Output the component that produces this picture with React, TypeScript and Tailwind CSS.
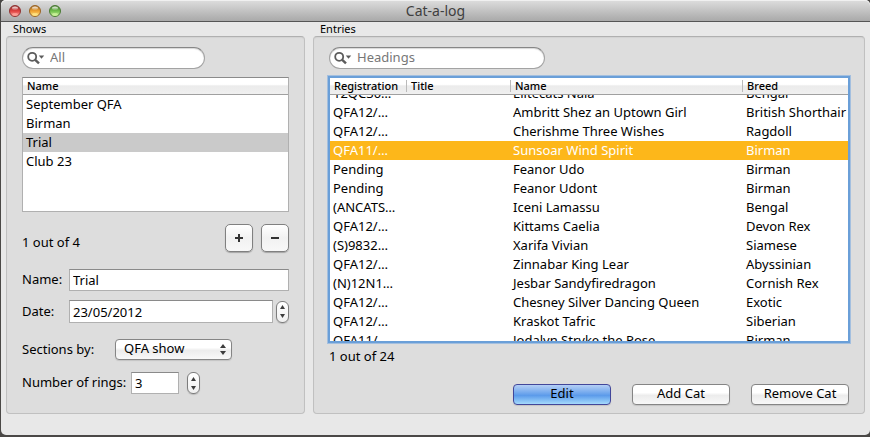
import { useLayoutEffect, useRef, type ReactNode } from "react";

const shows = ["September QFA", "Birman", "Trial", "Club 23"];

const entries: [string, string, string, string][] = [
  ["12QC30…", "", "Elitecats Nala", "Bengal"],
  ["QFA12/…", "", "Ambritt Shez an Uptown Girl", "British Shorthair"],
  ["QFA12/…", "", "Cherishme Three Wishes", "Ragdoll"],
  ["QFA11/…", "", "Sunsoar Wind Spirit", "Birman"],
  ["Pending", "", "Feanor Udo", "Birman"],
  ["Pending", "", "Feanor Udont", "Birman"],
  ["(ANCATS…", "", "Iceni Lamassu", "Bengal"],
  ["QFA12/…", "", "Kittams Caelia", "Devon Rex"],
  ["(S)9832…", "", "Xarifa Vivian", "Siamese"],
  ["QFA12/…", "", "Zinnabar King Lear", "Abyssinian"],
  ["(N)12N1…", "", "Jesbar Sandyfiredragon", "Cornish Rex"],
  ["QFA12/…", "", "Chesney Silver Dancing Queen", "Exotic"],
  ["QFA12/…", "", "Kraskot Tafric", "Siberian"],
  ["QFA11/…", "", "Jodalyn Stryke the Pose", "Birman"],
];

const headerCell =
  "sticky top-0 z-10 h-[17px] border-b border-[#a0a0a0] bg-linear-to-b from-white from-40% via-[#ebebeb] via-50% to-[#f0f0f0] p-0 text-left text-[11px] leading-4 font-medium";
const field =
  "border border-[#b0b0b0] border-t-[#8a8a8a] bg-white px-[3px] text-[13px] text-black outline-none";

function Light({ id, rim, base, glow }: { id: string; rim: string; base: string; glow: string }) {
  return (
    <button type="button" aria-label={id} className="size-3">
      <svg viewBox="0 0 12 12" className="block size-3">
        <defs>
          <linearGradient id={`${id}-body`} x1="0" y1="0" x2="0" y2="1">
            <stop offset="0" stopColor={rim} />
            <stop offset="0.5" stopColor={base} />
            <stop offset="1" stopColor={glow} />
          </linearGradient>
          <linearGradient id={`${id}-shine`} x1="0" y1="0" x2="0" y2="1">
            <stop offset="0" stopColor="#fff" stopOpacity="0.95" />
            <stop offset="1" stopColor="#fff" stopOpacity="0.1" />
          </linearGradient>
        </defs>
        <circle cx="6" cy="6" r="5.5" fill={`url(#${id}-body)`} stroke={rim} strokeWidth="1" />
        <ellipse cx="6" cy="3.2" rx="3" ry="1.8" fill={`url(#${id}-shine)`} />
        <ellipse cx="6" cy="9.4" rx="3" ry="1.3" fill={glow} opacity="0.7" />
      </svg>
    </button>
  );
}

function Search({ label, placeholder, width }: { label: string; placeholder: string; width: string }) {
  return (
    <label
      className={`flex h-[22px] items-center rounded-full border border-[#a3a3a3] border-t-[#868686] bg-white pl-1 shadow-[inset_0_1px_1px_#d8d8d8] ${width}`}
    >
      <svg viewBox="0 0 18 14" className="h-[14px] w-[18px] shrink-0" fill="none" stroke="#5c5c5c">
        <circle cx="5.2" cy="5.8" r="4" strokeWidth="1.8" />
        <path d="M8.2 8.8 L12 12.4" strokeWidth="2.4" />
        <path d="M11.8 4.6 H17.2 L14.5 7.8 Z" fill="#5c5c5c" stroke="none" />
      </svg>
      <input
        type="search"
        aria-label={label}
        placeholder={placeholder}
        className="ml-[5px] min-w-0 flex-1 bg-transparent text-[13px] outline-none placeholder:text-[#777777]"
      />
    </label>
  );
}

function Stepper({ label }: { label: string }) {
  return (
    <div className="flex h-[22px] w-[13px] shrink-0 flex-col overflow-hidden rounded-[6px] border border-[#7d7d7d] bg-linear-to-b from-white to-[#f0f0f0] shadow-[0_1px_1px_#bbbbbb]">
      <button type="button" aria-label={`Increase ${label}`} className="flex flex-1 items-center justify-center">
        <svg viewBox="0 0 5 4" className="mt-px h-1 w-[5px]" fill="#3c3c3c">
          <path d="M0 4 L2.5 0 L5 4 Z" />
        </svg>
      </button>
      <button type="button" aria-label={`Decrease ${label}`} className="flex flex-1 items-center justify-center">
        <svg viewBox="0 0 5 4" className="mb-px h-1 w-[5px]" fill="#3c3c3c">
          <path d="M0 0 L2.5 4 L5 0 Z" />
        </svg>
      </button>
    </div>
  );
}

function SquareButton({ label, d }: { label: string; d: string }) {
  return (
    <button
      type="button"
      aria-label={label}
      className="flex size-7 items-center justify-center rounded-[5px] border border-[#808080] bg-linear-to-b from-white via-[#f1f1f1] to-[#f8f8f8] shadow-[0_1px_1px_#a5a5a5]"
    >
      <svg viewBox="0 0 8 8" className="mb-px size-2" stroke="#333333" strokeWidth="2">
        <path d={d} />
      </svg>
    </button>
  );
}

function PushButton({ children, primary = false }: { children: ReactNode; primary?: boolean }) {
  return (
    <button
      type="button"
      className={`h-[21px] w-[98px] rounded-[4px] border pb-[2px] text-[13px] leading-[17px] shadow-[0_1px_1px_#c4c4c4] ${
        primary
          ? "border-[#42479a] bg-linear-to-b from-[#b4cff5] via-[#5c9bea] via-55% to-[#a5dafc]"
          : "border-[#858585] bg-linear-to-b from-white from-40% via-[#ececec] via-55% to-[#f8f8f8]"
      }`}
    >
      {children}
    </button>
  );
}

function Group({ title, className, children }: { title: string; className: string; children: ReactNode }) {
  return (
    <section className={`flex flex-col ${className}`}>
      <h2 className="h-[14px] pl-[7px] text-[11px] leading-[14px]">{title}</h2>
      <div className="flex flex-1 flex-col rounded-[4px] border border-[#c0c0c0] border-t-[#b0b0b0] bg-[#dddddd] px-[15px] pt-[10px] shadow-[inset_0_1px_1px_#d2d2d2]">
        {children}
      </div>
    </section>
  );
}

function ShowsPanel() {
  return (
    <Group title="Shows" className="w-[299px] shrink-0">
      <Search label="Search shows" placeholder="All" width="w-[183px]" />
      <div className="mt-2 h-[135px] overflow-hidden border border-[#b0b0b0] border-t-[#8a8a8a] bg-white">
        <table className="w-full border-separate border-spacing-0">
          <thead>
            <tr>
              <th className={headerCell}>
                <div className="pl-1">Name</div>
              </th>
            </tr>
          </thead>
          <tbody>
            {shows.map((show) => (
              <tr key={show} className={show === "Trial" ? "bg-[#cacaca]" : ""}>
                <td className="h-[19px] p-0 pl-[3px] text-[13px] leading-[19px]">{show}</td>
              </tr>
            ))}
          </tbody>
        </table>
      </div>
      <div className="mt-3 flex items-center">
        <p className="flex-1 pt-2 text-[13px] leading-[18px]">1 out of 4</p>
        <div className="flex gap-2">
          <SquareButton label="Add show" d="M0 4 H8 M4 0 V8" />
          <SquareButton label="Remove show" d="M0 4 H8" />
        </div>
      </div>
      <div className="mt-[17px] flex items-center">
        <label htmlFor="show-name" className="w-[47px] text-[13px]">Name:</label>
        <input id="show-name" defaultValue="Trial" className={`h-[22px] min-w-0 flex-1 ${field}`} />
      </div>
      <div className="mt-[9px] flex items-center">
        <label htmlFor="show-date" className="w-[47px] text-[13px]">Date:</label>
        <input id="show-date" defaultValue="23/05/2012" className={`mr-[3px] h-[23px] min-w-0 flex-1 ${field}`} />
        <Stepper label="date" />
      </div>
      <div className="mt-4 flex items-center">
        <label htmlFor="sections" className="w-[93px] text-[13px]">Sections by:</label>
        <div className="relative">
          <select
            id="sections"
            className="block h-[21px] w-[117px] appearance-none rounded-[4px] border border-[#858585] bg-linear-to-b from-white from-40% via-[#ececec] via-55% to-[#f8f8f8] pb-[2px] pl-2 text-[13px] leading-[17px] shadow-[0_1px_1px_#c4c4c4] outline-none"
          >
            <option>QFA show</option>
          </select>
          <svg viewBox="0 0 6 11" className="pointer-events-none absolute top-[5px] right-[6px] h-[11px] w-[6px]" fill="#3c3c3c">
            <path d="M0 4 L3 0 L6 4 Z M0 7 L3 11 L6 7 Z" />
          </svg>
        </div>
      </div>
      <div className="mt-3 mb-[19px] flex items-center">
        <label htmlFor="rings" className="w-[109px] text-[13px]">Number of rings:</label>
        <input id="rings" inputMode="numeric" defaultValue="3" className={`mr-2 h-[22px] w-12 ${field}`} />
        <Stepper label="rings" />
      </div>
    </Group>
  );
}

function EntriesPanel() {
  const list = useRef<HTMLDivElement>(null);
  useLayoutEffect(() => {
    if (list.current) list.current.scrollTop = 11;
  }, []);

  return (
    <Group title="Entries" className="min-w-0 flex-1">
      <Search label="Search entries" placeholder="Headings" width="w-[216px]" />
      <div
        ref={list}
        className="-mx-px mt-[7px] h-[267px] overflow-y-auto border-2 border-[#6a9fd8] bg-white shadow-[0_0_0_1px_#a3bfdf] [scrollbar-width:none]"
      >
        <table className="w-full table-fixed border-separate border-spacing-0">
          <colgroup>
            <col className="w-[76px]" />
            <col className="w-[104px]" />
            <col />
            <col className="w-[106px]" />
          </colgroup>
          <thead>
            <tr>
              {["Registration", "Title", "Name", "Breed"].map((name, i) => (
                <th key={name} className={headerCell}>
                  <div className={`my-[2px] h-3 leading-3 ${i > 0 ? "border-l border-[#bbbbbb] pl-1" : "pl-1"}`}>{name}</div>
                </th>
              ))}
            </tr>
          </thead>
          <tbody>
            {entries.map((row) => {
              const selected = row[2] === "Sunsoar Wind Spirit";
              return (
                <tr key={row[2]} className={selected ? "bg-[#fdb71a] text-white" : ""}>
                  {row.map((cell, i) => (
                    <td key={i} className="h-[19px] p-0 pl-[3px] text-[13px] leading-[19px] whitespace-nowrap last:pl-1">
                      {cell}
                    </td>
                  ))}
                </tr>
              );
            })}
          </tbody>
        </table>
      </div>
      <p className="mt-1 text-[13px] leading-[18px]">1 out of 24</p>
      <div className="mt-[19px] mb-2 flex justify-end gap-[21px]">
        <PushButton primary>Edit</PushButton>
        <PushButton>Add Cat</PushButton>
        <PushButton>Remove Cat</PushButton>
      </div>
    </Group>
  );
}

export default function App() {
  return (
    <div className="flex min-h-screen flex-col bg-[#4a4846] pb-[2px] pl-px font-['Noto_Sans','Lucida_Grande',sans-serif] text-black">
      <div className="flex flex-1 flex-col rounded-[5px] bg-[#e8e8e8]">
        <header className="grid h-[22px] grid-cols-[1fr_auto_1fr] items-center rounded-t-[5px] border-b border-[#555555] bg-linear-to-b from-[#dedede] to-[#a9a9a9] px-2 shadow-[inset_0_1px_0_#f0f0f0]">
          <div className="flex gap-2">
            <Light id="close" rim="#8f3433" base="#e0403f" glow="#ffa9a0" />
            <Light id="minimize" rim="#9a6526" base="#efa12f" glow="#ffe98a" />
            <Light id="zoom" rim="#4b7a35" base="#6fbf4b" glow="#d2f5a0" />
          </div>
          <h1 className="text-[14px] leading-5 text-[#3f3f3f]">Cat-a-log</h1>
        </header>
        <main className="flex flex-1 gap-2 pr-[5px] pb-[21px] pl-[5px]">
          <ShowsPanel />
          <EntriesPanel />
        </main>
      </div>
    </div>
  );
}
